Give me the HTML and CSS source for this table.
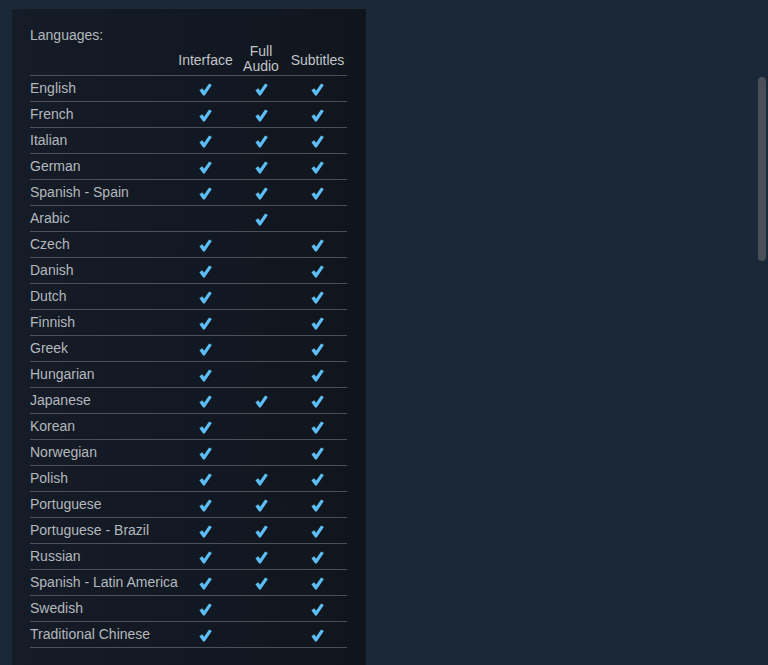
FILE: index.html
```html
<!DOCTYPE html>
<html lang="en">
<head>
    <meta charset="UTF-8">
    <meta name="viewport" content="width=device-width, initial-scale=1.0">
    <title>Languages</title>
    <link rel="stylesheet" href="styles.css">
</head>
<body>
    <!-- Bloque de idiomas -->
    <div class="panel">
        <div class="panel-title">Languages:</div>
        <table class="languages">
            <thead>
                <tr>
                    <th class="col-name"></th>
                    <th class="col-ui">Interface</th>
                    <th class="col-audio">Full<br>Audio</th>
                    <th class="col-subs">Subtitles</th>
                </tr>
            </thead>
            <tbody id="rows"></tbody>
        </table>
    </div>

    <div class="spacer"></div>

    <!-- Barra de desplazamiento -->
    <div class="scrollbar">
        <div class="thumb"></div>
    </div>

    <script>
        const idiomas = [
            ['English', 1, 1, 1],
            ['French', 1, 1, 1],
            ['Italian', 1, 1, 1],
            ['German', 1, 1, 1],
            ['Spanish - Spain', 1, 1, 1],
            ['Arabic', 0, 1, 0],
            ['Czech', 1, 0, 1],
            ['Danish', 1, 0, 1],
            ['Dutch', 1, 0, 1],
            ['Finnish', 1, 0, 1],
            ['Greek', 1, 0, 1],
            ['Hungarian', 1, 0, 1],
            ['Japanese', 1, 1, 1],
            ['Korean', 1, 0, 1],
            ['Norwegian', 1, 0, 1],
            ['Polish', 1, 1, 1],
            ['Portuguese', 1, 1, 1],
            ['Portuguese - Brazil', 1, 1, 1],
            ['Russian', 1, 1, 1],
            ['Spanish - Latin America', 1, 1, 1],
            ['Swedish', 1, 0, 1],
            ['Traditional Chinese', 1, 0, 1]
        ];

        const check = '<svg class="check" viewBox="0 0 13 13" width="13" height="13"><path d="M0.4 7.2 L3.3 5.3 L5.1 7.7 L10.1 0.4 L12.9 2.1 L5.7 12.6 L4.1 12.6 Z"/></svg>';

        const cuerpo = document.getElementById('rows');
        idiomas.forEach(fila => {
            const tr = document.createElement('tr');
            tr.innerHTML = `<td class="col-name">${fila[0]}</td>` +
                fila.slice(1).map(v => `<td class="mark">${v ? check : ''}</td>`).join('');
            cuerpo.appendChild(tr);
        });
    </script>
</body>
</html>
```

FILE: styles.css
```css
/* Estilos generales */
html, body {
    height: 100%;
}

body {
    margin: 0;
    padding: 9px 0 0 12px;
    box-sizing: border-box;
    background-color: #1b2838;
    font-family: Arial, "Liberation Sans", sans-serif;
    display: flex;
    align-items: flex-start;
    overflow: hidden;
}

/* Panel de idiomas */
.panel {
    width: 354px;
    min-height: 700px;
    box-sizing: border-box;
    padding: 17px 19px 0 18px;
    background: linear-gradient(to right, #151c27, #10151d);
}

.panel-title {
    font-size: 14px;
    line-height: 18px;
    color: #b3b8bd;
}

.languages {
    width: 317px;
    table-layout: fixed;
    border-collapse: collapse;
    font-size: 14px;
    color: #b3b8bd;
    white-space: nowrap;
}

.languages th {
    font-weight: normal;
    line-height: 15px;
    height: 30px;
    padding: 0;
    vertical-align: bottom;
    text-align: center;
    color: #c1c5c9;
    border-bottom: 1px solid #4a5159;
}

.languages th.col-audio {
    padding-bottom: 1px;
    height: 29px;
}

.languages th.col-ui,
.languages th.col-subs {
    padding-bottom: 7px;
    height: 23px;
}

.languages td {
    height: 25px;
    padding: 0;
    border-bottom: 1px solid #4a5159;
    vertical-align: middle;
}

.languages td.col-name {
    height: 23px;
    padding-bottom: 2px;
    overflow: visible;
}

.col-name {
    width: 147px;
    text-align: left;
}

.col-ui {
    width: 57px;
}

.col-audio {
    width: 54px;
}

.col-subs {
    width: 59px;
}

.mark {
    text-align: center;
}

.check {
    display: block;
    margin: 1px auto 0;
    fill: #5dbdf4;
}

.spacer {
    flex: 1;
}

/* Barra de desplazamiento */
.scrollbar {
    width: 15px;
    height: 100%;
    padding-top: 68px;
    box-sizing: border-box;
}

.thumb {
    width: 8px;
    height: 184px;
    margin-left: 5px;
    border-radius: 4px;
    background-color: #4b4f59;
}
```
